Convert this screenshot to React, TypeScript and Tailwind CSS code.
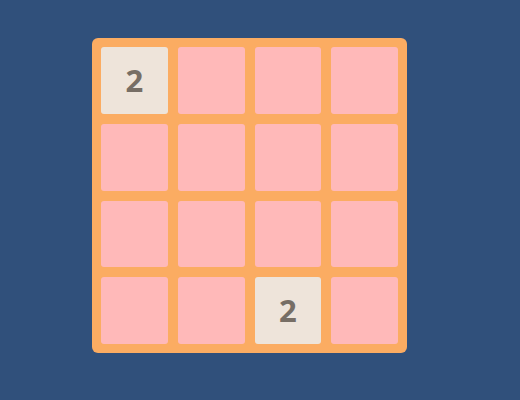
import React from 'react';

const cells: (number | null)[] = [
  2, null, null, null,
  null, null, null, null,
  null, null, null, null,
  null, null, 2, null,
];

function Tile({ value }: { value: number | null }) {
  if (value === null) {
    return <div className="rounded-[3px] bg-[#ffb9b9]" />;
  }
  return (
    <div className="flex items-center justify-center rounded-[3px] bg-[#eee4da] text-[31px] font-bold text-[#776e65] [font-family:'Open_Sans',sans-serif]">
      {value}
    </div>
  );
}

export default function App() {
  return (
    <div className="h-[400px] w-[520px] bg-[#30507b] pl-[92px] pt-[38px]">
      <div className="grid h-[315px] w-[315px] grid-cols-4 grid-rows-4 gap-[10px] rounded-[6px] bg-[#fbac62] p-[9px]">
        {cells.map((v, i) => (
          <Tile key={i} value={v} />
        ))}
      </div>
    </div>
  );
}
